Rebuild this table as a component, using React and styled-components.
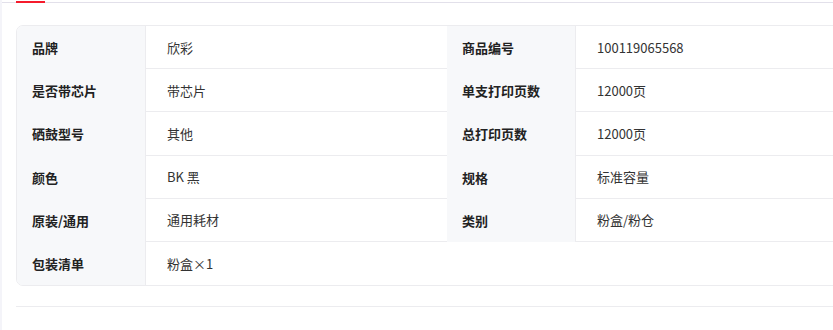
import React from 'react'
import styled, { createGlobalStyle } from 'styled-components'

const GlobalStyle = createGlobalStyle`
  html, body {
    margin: 0;
    padding: 0;
    background: #f4f4f9;
    font-family: "Noto Sans CJK SC", "Noto Sans", sans-serif;
  }
`

const Page = styled.div`
  margin-left: 2px;
  min-height: 330px;
  background: #fff;
  overflow: hidden;
`

const TabBar = styled.div`
  height: 2px;
  padding-left: 14px;
  border-bottom: 1px solid #e2e0ea;
  display: flex;
  align-items: flex-start;
`

const ActiveBar = styled.div`
  width: 29px;
  height: 2px;
  margin-top: 1px;
  background: #f51b2c;
`

const Content = styled.div`
  padding: 22px 0 0 14px;
`

const Table = styled.div`
  width: 862px;
  display: grid;
  grid-template-columns: 129px 301px 129px 1fr;
  border: 1px solid #ececef;
  border-radius: 7px;
  overflow: hidden;
`

const Label = styled.div`
  display: flex;
  align-items: center;
  padding-left: 15px;
  background: #f7f8fa;
  border-right: 1px solid #ececef;
  font-size: 13px;
  font-weight: 600;
  color: #222;
`

const Value = styled.div`
  grid-column: ${p => (p.$wide ? 'span 3' : 'auto')};
  display: flex;
  align-items: center;
  height: 43.2px;
  box-sizing: border-box;
  padding-left: 21px;
  border-bottom: ${p => (p.$last ? 'none' : '1px solid #ececef')};
  font-size: 13px;
  color: #333;
`

const Divider = styled.div`
  margin-top: 20px;
  height: 1px;
  background: #ececef;
`

const rows = [
  ['品牌', '欣彩', '商品编号', '100119065568'],
  ['是否带芯片', '带芯片', '单支打印页数', '12000页'],
  ['硒鼓型号', '其他', '总打印页数', '12000页'],
  ['颜色', 'BK 黑', '规格', '标准容量'],
  ['原装/通用', '通用耗材', '类别', '粉盒/粉仓'],
]

export default function App() {
  return (
    <>
      <GlobalStyle />
      <Page>
        <TabBar>
          <ActiveBar />
        </TabBar>
        <Content>
          <Table>
            {rows.map(([l1, v1, l2, v2]) => (
              <React.Fragment key={l1}>
                <Label>{l1}</Label>
                <Value>{v1}</Value>
                <Label>{l2}</Label>
                <Value>{v2}</Value>
              </React.Fragment>
            ))}
            <Label>包装清单</Label>
            <Value $wide $last>粉盒×1</Value>
          </Table>
          <Divider />
        </Content>
      </Page>
    </>
  )
}
